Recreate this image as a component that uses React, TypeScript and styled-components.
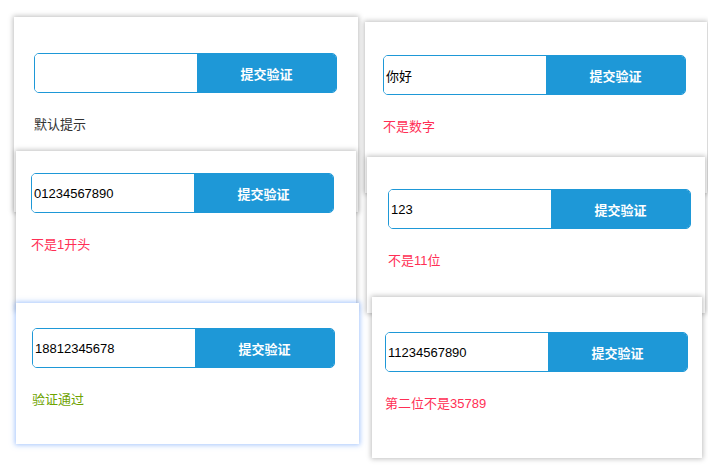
import styled, { createGlobalStyle } from 'styled-components'

const GlobalStyle = createGlobalStyle`
    html, body {
        margin: 0;
        padding: 0;
        background: #ffffff;
    }
    body {
        font-family: 'Liberation Sans', Arial, 'Noto Sans CJK SC', sans-serif;
    }
`

const Desk = styled.div`
    position: relative;
    width: 708px;
    height: 468px;
    overflow: hidden;
    background: #ffffff;
`

// each card is a cropped screenshot laid on the canvas
const Card = styled.div<{ $glow?: boolean }>`
    position: absolute;
    box-sizing: border-box;
    display: flex;
    flex-direction: column;
    align-items: flex-start;
    background: #ffffff;
    box-shadow: ${(p) =>
        p.$glow
            ? '0 0 5px 1px rgba(90, 150, 250, 0.55)'
            : '0 0 5px 1px rgba(0, 0, 0, 0.25)'};
`

const Form = styled.div`
    display: flex;
    width: 303px;
    height: 40px;
    box-sizing: border-box;
    border: 1px solid #1e98d7;
    border-radius: 5px;
    overflow: hidden;
`

const Field = styled.div`
    box-sizing: border-box;
    width: 162px;
    display: flex;
    align-items: center;
    padding-left: 2px;
    font-size: 13px;
    color: #000000;
    background: #ffffff;
`

const Button = styled.div`
    flex: 1;
    display: flex;
    align-items: center;
    justify-content: center;
    background: #1e98d7;
    color: #ffffff;
    font-size: 13px;
    font-weight: bold;
`

const Message = styled.div<{ $tone: 'plain' | 'error' | 'ok' }>`
    margin-top: 24px;
    line-height: 16px;
    font-size: 13px;
    color: ${(p) =>
        p.$tone === 'error' ? '#ff2f55' : p.$tone === 'ok' ? '#6ea300' : '#333333'};
`

type Shot = {
    x: number
    y: number
    w: number
    h: number
    padTop: number
    padLeft: number
    value: string
    message: string
    tone: 'plain' | 'error' | 'ok'
    glow?: boolean
}

const shots: Shot[] = [
    { x: 14, y: 17, w: 344, h: 195, padTop: 36, padLeft: 20, value: '', message: '默认提示', tone: 'plain' },
    { x: 365, y: 22, w: 342, h: 171, padTop: 33, padLeft: 18, value: '你好', message: '不是数字', tone: 'error' },
    { x: 16, y: 151, w: 340, h: 160, padTop: 22, padLeft: 15, value: '01234567890', message: '不是1开头', tone: 'error' },
    { x: 367, y: 157, w: 338, h: 156, padTop: 32, padLeft: 21, value: '123', message: '不是11位', tone: 'error' },
    { x: 16, y: 303, w: 343, h: 141, padTop: 25, padLeft: 16, value: '18812345678', message: '验证通过', tone: 'ok', glow: true },
    { x: 372, y: 297, w: 330, h: 161, padTop: 35, padLeft: 13, value: '11234567890', message: '第二位不是35789', tone: 'error' },
]

export default function App() {
    return (
        <>
            <GlobalStyle />
            <Desk>
                {shots.map((s, i) => (
                    <Card
                        key={i}
                        $glow={s.glow}
                        style={{
                            left: s.x,
                            top: s.y,
                            width: s.w,
                            height: s.h,
                            paddingTop: s.padTop,
                            paddingLeft: s.padLeft,
                        }}
                    >
                        <Form>
                            <Field>{s.value}</Field>
                            <Button>提交验证</Button>
                        </Form>
                        <Message $tone={s.tone}>{s.message}</Message>
                    </Card>
                ))}
            </Desk>
        </>
    )
}
